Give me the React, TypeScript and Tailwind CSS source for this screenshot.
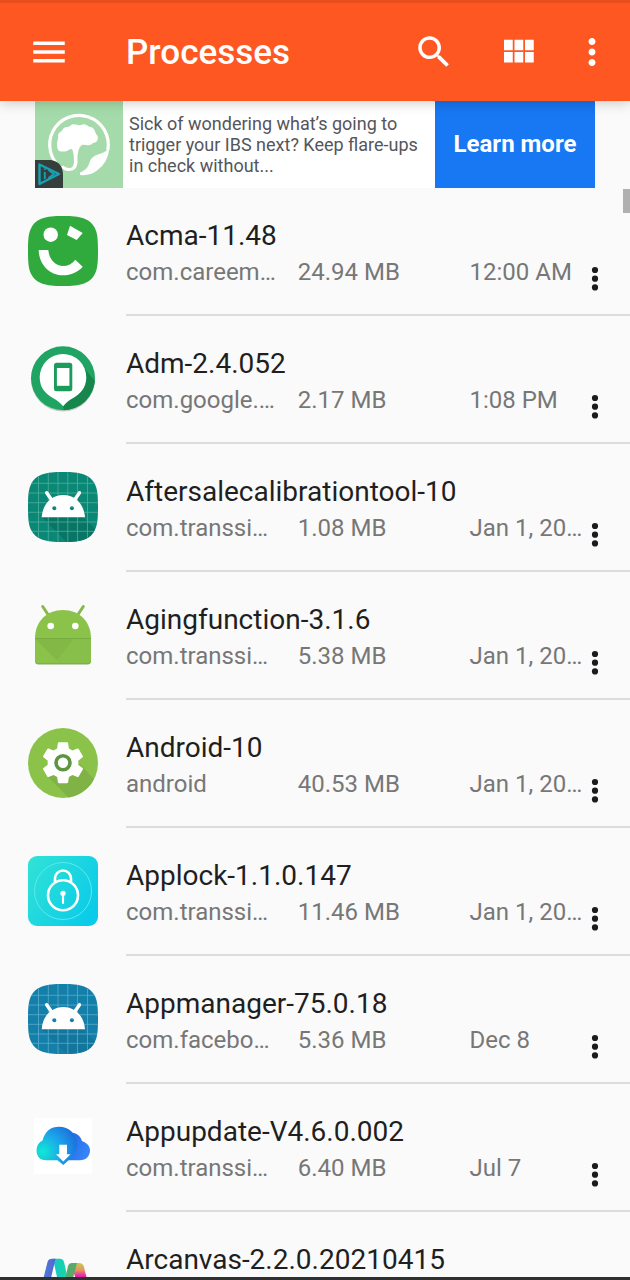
import type { ReactNode } from "react";

function AppIcon({ children }: { children: ReactNode }) {
  return (
    <svg viewBox="0 0 70 70" className="size-[70px] shrink-0" aria-hidden="true">
      {children}
    </svg>
  );
}

const SQUIRCLE =
  "M0 35C0 23 0.500 16 4 10.500 9 2.500 17 0 35 0S61 2.500 66 10.500C69.500 16 70 23 70 35S69.500 54 66 59.500C61 67.500 53 70 35 70S9 67.500 4 59.500C0.500 54 0 47 0 35Z";

function AcmaIcon() {
  return (
    <AppIcon>
      <path d={SQUIRCLE} fill="#30aa3d" />
      <circle cx="22.7" cy="18.7" r="7.2" fill="#fff" />
      <path d="M42 9.7 54.7 17 48.7 23.9 39 19Z" fill="#fff" />
      <path
        d="M10.7 34H20.3C21 43 27 50 35 50 40 50 44 48 47.3 43.7L54.7 50.7C50 56 43 59.3 35 59.3 21 59.3 11 48 10.7 34Z"
        fill="#fff"
      />
    </AppIcon>
  );
}

function AdmIcon() {
  return (
    <AppIcon>
      <circle cx="35" cy="35.6" r="32" fill="#c4cfc9" />
      <circle cx="35" cy="34.3" r="32" fill="#1fa463" />
      <path d="M57 25 66.8 37A32 32 0 0 1 36 66.2L35 62Z" fill="#16864c" />
      <path
        d="M35 10A23.3 23.3 0 0 1 58.3 33.3C58.3 44 52 50 46 53.5 41 56.5 38 58.5 35.2 62.3 32 58.5 29 56.5 24 53.5 18 50 11.7 44 11.7 33.3A23.3 23.3 0 0 1 35 10Z"
        fill="#fff"
      />
      <rect x="26" y="18.7" width="18.3" height="28.6" rx="2.5" fill="#1b9c5b" />
      <rect x="28.9" y="24" width="12.5" height="17.8" fill="#fff" />
    </AppIcon>
  );
}

function RobotIcon({ color, line, shade }: { color: string; line: string; shade: string }) {
  return (
    <AppIcon>
      <path d={SQUIRCLE} fill={color} />
      <path d="M14 45.3 38.5 70C56 70 62 66 66 59.5L67 57 54 44Z" fill={shade} />
      <path
        d="M10.5 4.5V65.5M20.3 1V69M30 0V70M39.8 0V70M49.5 1V69M59.5 4.5V65.5M3.5 11.3H66.5M1 21H69M0 30.7H70M0 40.3H70M1 50H69M4 59.3H66"
        stroke={line}
        strokeWidth="0.8"
        fill="none"
      />
      <path d="M18.7 20.7 24 28.5M51.5 20.7 46.2 28.5" stroke="#fff" strokeWidth="3.4" strokeLinecap="round" />
      <path d="M13.7 45.3C14.5 32 23.5 23 35.3 23S56 32 57 45.3Z" fill="#fff" />
      <circle cx="26.3" cy="36.2" r="2" fill={color} />
      <circle cx="43.9" cy="36.2" r="2" fill={color} />
    </AppIcon>
  );
}

function AgingIcon() {
  return (
    <AppIcon>
      <path d="M14.7 6.500 21 16M55.300 6.500 49 16" stroke="#86b84a" strokeWidth="3" strokeLinecap="round" />
      <path d="M7 38.5H63V61Q63 64.500 59.500 64.500H10.500Q7 64.500 7 61Z" fill="#86a866" />
      <path d="M7 38.5C7 21 19 10 35 10S63 21 63 38.5V60Q63 63 60 63H10Q7 63 7 60Z" fill="#8bc34a" />
      <path d="M7 38.5H63V63H31Z" fill="#88be4a" />
      <path d="M7 38.5 29 60 46 38.5Z" fill="#83b847" />
      <path d="M7 38.5H63" stroke="#78ac40" strokeWidth="1" />
      <circle cx="22.7" cy="26" r="3.3" fill="#fff" />
      <circle cx="47.3" cy="26" r="3.3" fill="#fff" />
    </AppIcon>
  );
}

function AndroidIcon() {
  return (
    <AppIcon>
      <circle cx="35" cy="35" r="35" fill="#8bc34a" />
      <path d="M20 49 40.5 69.6C54 67 62 59 66 51L52 36Z" fill="#7fb345" />
      <g transform="translate(35 34.7) scale(2.05) translate(-12 -12)">
        <path
          d="M19.43 12.98c.04-.32.07-.64.07-.98s-.03-.66-.07-.98l2.11-1.65c.19-.15.24-.42.12-.64l-2-3.46c-.12-.22-.39-.3-.61-.22l-2.49 1c-.52-.4-1.08-.73-1.69-.98l-.38-2.65C14.46 2.18 14.25 2 14 2h-4c-.25 0-.46.18-.49.42l-.38 2.65c-.61.25-1.17.59-1.69.98l-2.49-1c-.23-.09-.49 0-.61.22l-2 3.46c-.13.22-.07.49.12.64l2.11 1.65c-.04.32-.07.65-.07.98s.03.66.07.98l-2.11 1.65c-.19.15-.24.42-.12.64l2 3.46c.12.22.39.3.61.22l2.49-1c.52.4 1.08.73 1.69.98l.38 2.65c.03.24.24.42.49.42h4c.25 0 .46-.18.49-.42l.38-2.65c.61-.25 1.17-.59 1.69-.98l2.49 1c.23.09.49 0 .61-.22l2-3.46c.12-.22.07-.49-.12-.64l-2.11-1.65z"
          fill="#fff"
        />
      </g>
      <circle cx="35" cy="34.7" r="7" fill="#fff" stroke="#5f9440" strokeWidth="3.6" />
    </AppIcon>
  );
}

function ApplockIcon() {
  return (
    <AppIcon>
      <defs>
        <linearGradient id="applock-bg" x1="0" y1="0.1" x2="1" y2="0.7">
          <stop offset="0" stopColor="#30e2d6" />
          <stop offset="1" stopColor="#0acbe9" />
        </linearGradient>
      </defs>
      <rect width="70" height="70" rx="9" fill="url(#applock-bg)" />
      <circle cx="35" cy="35" r="28.5" fill="none" stroke="#5ee8ee" strokeWidth="1" />
      <circle cx="35" cy="39.3" r="15" fill="none" stroke="#fff" strokeWidth="2.6" />
      <path d="M27 26V22.5A8 8 0 0 1 43 22.5V26" fill="none" stroke="#fff" strokeWidth="2.6" />
      <circle cx="35" cy="37.3" r="2.6" fill="#fff" />
      <path d="M35 38V47" stroke="#fff" strokeWidth="2.2" strokeLinecap="round" />
    </AppIcon>
  );
}

function AppupdateIcon() {
  return (
    <AppIcon>
      <defs>
        <radialGradient id="cloud-left" cx="0.15" cy="0.65" r="0.95">
          <stop offset="0" stopColor="#10e9d2" />
          <stop offset="0.5" stopColor="#1ba5ea" />
          <stop offset="1" stopColor="#1c68d8" />
        </radialGradient>
        <linearGradient id="cloud-right" x1="0" y1="0" x2="1" y2="0.5">
          <stop offset="0" stopColor="#2361d8" />
          <stop offset="1" stopColor="#3484fa" />
        </linearGradient>
      </defs>
      <path d="M6 6H64V62H6Z" fill="#fff" />
      <path d="M34 24C40 19 51 19 54 29 59 31 62 34 62 38.5 62 44 58 48.3 52 48.3H34Z" fill="url(#cloud-right)" />
      <path
        d="M14.5 28.5C17 19 23 14.7 31 14.7 41 14.7 49 22 49 32 49 38 46 44 40.5 48.3L35.3 53 29.5 48.3H18C12 48.3 8.500 44 8.500 38.5 8.500 34 10.500 30.5 14.5 28.5Z"
        fill="url(#cloud-left)"
      />
      <path d="M31.3 32.7H39V42.3H42.5L35.3 49.5 28 42.3H31.3Z" fill="#fff" />
    </AppIcon>
  );
}

function ArcanvasIcon() {
  return (
    <AppIcon>
      <defs>
        <linearGradient id="arc-a" x1="0" y1="0" x2="1" y2="0">
          <stop offset="0" stopColor="#4385dc" />
          <stop offset="1" stopColor="#5866cd" />
        </linearGradient>
        <linearGradient id="arc-b" x1="0" y1="0" x2="1" y2="0">
          <stop offset="0" stopColor="#18c5c9" />
          <stop offset="1" stopColor="#16df92" />
        </linearGradient>
        <linearGradient id="arc-c" x1="0" y1="0" x2="0" y2="1">
          <stop offset="0" stopColor="#c7cc4d" />
          <stop offset="0.2" stopColor="#e79061" />
          <stop offset="0.35" stopColor="#ec1eae" />
        </linearGradient>
      </defs>
      <path d="M25 18.7H32Q35 18.7 36 22L45 60H34Z" fill="url(#arc-b)" />
      <path d="M15.5 38 19.5 22Q20.5 18.7 24 18.7H27.5L23 38 18 60H10Z" fill="url(#arc-a)" />
      <path d="M43 23H51Q55 23 56 27L64 60H54Z" fill="url(#arc-c)" />
      <path d="M37.5 38 40 26Q41 23 44 23H49L45 38 40 60H34Z" fill="#59a86c" />
    </AppIcon>
  );
}

interface Process {
  title: string;
  details: string[];
  icon: ReactNode;
}

const processes: Process[] = [
  { title: "Acma-11.48", details: ["com.careem…", "24.94 MB", "12:00 AM"], icon: <AcmaIcon /> },
  { title: "Adm-2.4.052", details: ["com.google.…", "2.17 MB", "1:08 PM"], icon: <AdmIcon /> },
  {
    title: "Aftersalecalibrationtool-10",
    details: ["com.transsi…", "1.08 MB", "Jan 1, 20…"],
    icon: <RobotIcon color="#0b8875" line="#4fae9e" shade="#087565" />,
  },
  { title: "Agingfunction-3.1.6", details: ["com.transsi…", "5.38 MB", "Jan 1, 20…"], icon: <AgingIcon /> },
  { title: "Android-10", details: ["android", "40.53 MB", "Jan 1, 20…"], icon: <AndroidIcon /> },
  { title: "Applock-1.1.0.147", details: ["com.transsi…", "11.46 MB", "Jan 1, 20…"], icon: <ApplockIcon /> },
  {
    title: "Appmanager-75.0.18",
    details: ["com.facebo…", "5.36 MB", "Dec 8"],
    icon: <RobotIcon color="#1480aa" line="#5aaccb" shade="#12769d" />,
  },
  { title: "Appupdate-V4.6.0.002", details: ["com.transsi…", "6.40 MB", "Jul 7"], icon: <AppupdateIcon /> },
  { title: "Arcanvas-2.2.0.20210415", details: [], icon: <ArcanvasIcon /> },
];

function BarButton({ label, className, children }: { label: string; className?: string; children: ReactNode }) {
  return (
    <button type="button" aria-label={label} className={className}>
      <svg viewBox="0 0 24 24" className="size-[42px]" fill="currentColor" aria-hidden="true">
        {children}
      </svg>
    </button>
  );
}

function Header() {
  return (
    <header className="relative z-10 flex h-[101px] shrink-0 items-center border-t-3 border-[#e64e1e] bg-[#ff5722] pr-[17px] pl-7 text-white shadow-[0_2px_12px_rgba(0,0,0,0.2)]">
      <BarButton label="Open menu">
        <path d="M3 18h18v-2H3v2zm0-5h18v-2H3v2zm0-7v2h18V6H3z" />
      </BarButton>
      <h1 className="ml-14 flex-1 pt-px text-[35px] leading-10 font-medium">Processes</h1>
      <BarButton label="Search">
        <path d="M15.5 14h-.79l-.28-.27C15.41 12.59 16 11.11 16 9.5 16 5.91 13.09 3 9.5 3S3 5.91 3 9.5 5.91 16 9.5 16c1.61 0 3.09-.59 4.23-1.57l.27.28v.79l5 4.99L20.49 19l-4.99-5zm-6 0C7.01 14 5 11.99 5 9.5S7.01 5 9.5 5 14 7.01 14 9.5 11.99 14 9.5 14z" />
      </BarButton>
      <BarButton label="Grid view" className="ml-[42px]">
        <path d="M4 11h5V5H4v6zm0 7h5v-6H4v6zm6 0h5v-6h-5v6zm6 0h5v-6h-5v6zm-6-7h5V5h-5v6zm6-6v6h5V5h-5z" />
      </BarButton>
      <BarButton label="More options" className="ml-8">
        <path d="M12 8c1.1 0 2-.9 2-2s-.9-2-2-2-2 .9-2 2 .9 2 2 2zm0 2c-1.1 0-2 .9-2 2s.9 2 2 2 2-.9 2-2-.9-2-2-2zm0 6c-1.1 0-2 .9-2 2s.9 2 2 2 2-.9 2-2-.9-2-2-2z" />
      </BarButton>
    </header>
  );
}

function AdBanner() {
  return (
    <aside aria-label="Advertisement" className="mx-[35px] flex h-[87px] shrink-0 bg-white">
      <svg viewBox="0 0 88 87" className="h-full w-[88px] shrink-0" aria-hidden="true">
        <rect width="88" height="87" fill="#a5dbaa" />
        <path d="M27 67.5A29.3 29.3 0 1 1 72.8 49" fill="none" stroke="#fff" strokeWidth="3.2" />
        <path
          d="M74.4 47C68 54 62 52 57 57 53 61 56 67 45 71.5V74Q55 75 62 69.500 73 62 74.400 47Z"
          fill="#fff"
        />
        <path
          d="M22 44C22 39 24 37 23 35 23 31 27 31 28 28 30 25 34 27 36 24 39 22 43 25 46 24 50 22 52 25 55 26 59 26 60 30 61 33 65 37 62 42 58 42 55 46 50 43 47 44 44 46 43 50 42.500 56V62Q41.500 70.500 33 70 30 70 26 66.500L28 64.500Q32 67.500 35 67 39 66.500 39 60 39 52 37 48 34 48 32 50 28 51 24 50 22 48 22 44Z"
          fill="#fff"
        />
        <path d="M0 59H16Q28 61 28 74V87H0Z" fill="#343f3c" />
        <path d="M4.500 63.500 24 73 4.500 83Z" fill="none" stroke="#1aa0b4" strokeWidth="2.4" strokeLinejoin="round" />
        <path d="M9.800 71V78M9.800 67.500V69M13.500 69 19 73 13.500 77" fill="none" stroke="#1aa0b4" strokeWidth="1.8" />
      </svg>
      <p className="min-w-0 flex-1 self-center pl-[6px] text-lg leading-[21px] text-[#55555c]">
        Sick of wondering what’s going to
        <br />
        trigger your IBS next? Keep flare-ups
        <br />
        in check without...
      </p>
      <a
        href="#learn-more"
        className="flex w-40 shrink-0 items-center justify-center bg-[#1877f2] pb-[2px] text-2xl font-bold text-white"
      >
        Learn more
      </a>
    </aside>
  );
}

function ProcessRow({ process }: { process: Process }) {
  return (
    <li className="flex h-32 gap-7 pl-7">
      <div className="pt-7">{process.icon}</div>
      <div className="flex min-w-0 flex-1 border-b-2 border-[#dcdcdc] pt-[30px]">
        <div className="min-w-0 flex-1">
          <h2 className="truncate text-[28px] leading-9 text-[#1f1f1f]">{process.title}</h2>
          <div className="grid grid-cols-[3fr_3fr_2fr] text-2xl leading-9 whitespace-nowrap text-[#777777]">
            {process.details.map((detail) => (
              <span key={detail}>{detail}</span>
            ))}
          </div>
        </div>
        <button type="button" aria-label={`Options for ${process.title}`} className="mt-[43px] mr-6 h-9 w-[22px]">
          <svg viewBox="0 0 22 36" className="h-9 w-[22px]" fill="#1c1c1c" aria-hidden="true">
            <circle cx="11" cy="9" r="3.1" />
            <circle cx="11" cy="17.7" r="3.1" />
            <circle cx="11" cy="26.4" r="3.1" />
          </svg>
        </button>
      </div>
    </li>
  );
}

export default function App() {
  return (
    <div className="flex h-dvh flex-col overflow-hidden border-b-3 border-[#303030] bg-[#fafafa] font-['Roboto',sans-serif]">
      <Header />
      <AdBanner />
      <main className="relative min-h-0 flex-1">
        <ul className="h-full overflow-y-auto [scrollbar-width:none]">
          {processes.map((process) => (
            <ProcessRow key={process.title} process={process} />
          ))}
        </ul>
        <div className="absolute top-px right-0 h-6 w-[7px] bg-[#b0b0b0]" />
      </main>
    </div>
  );
}
